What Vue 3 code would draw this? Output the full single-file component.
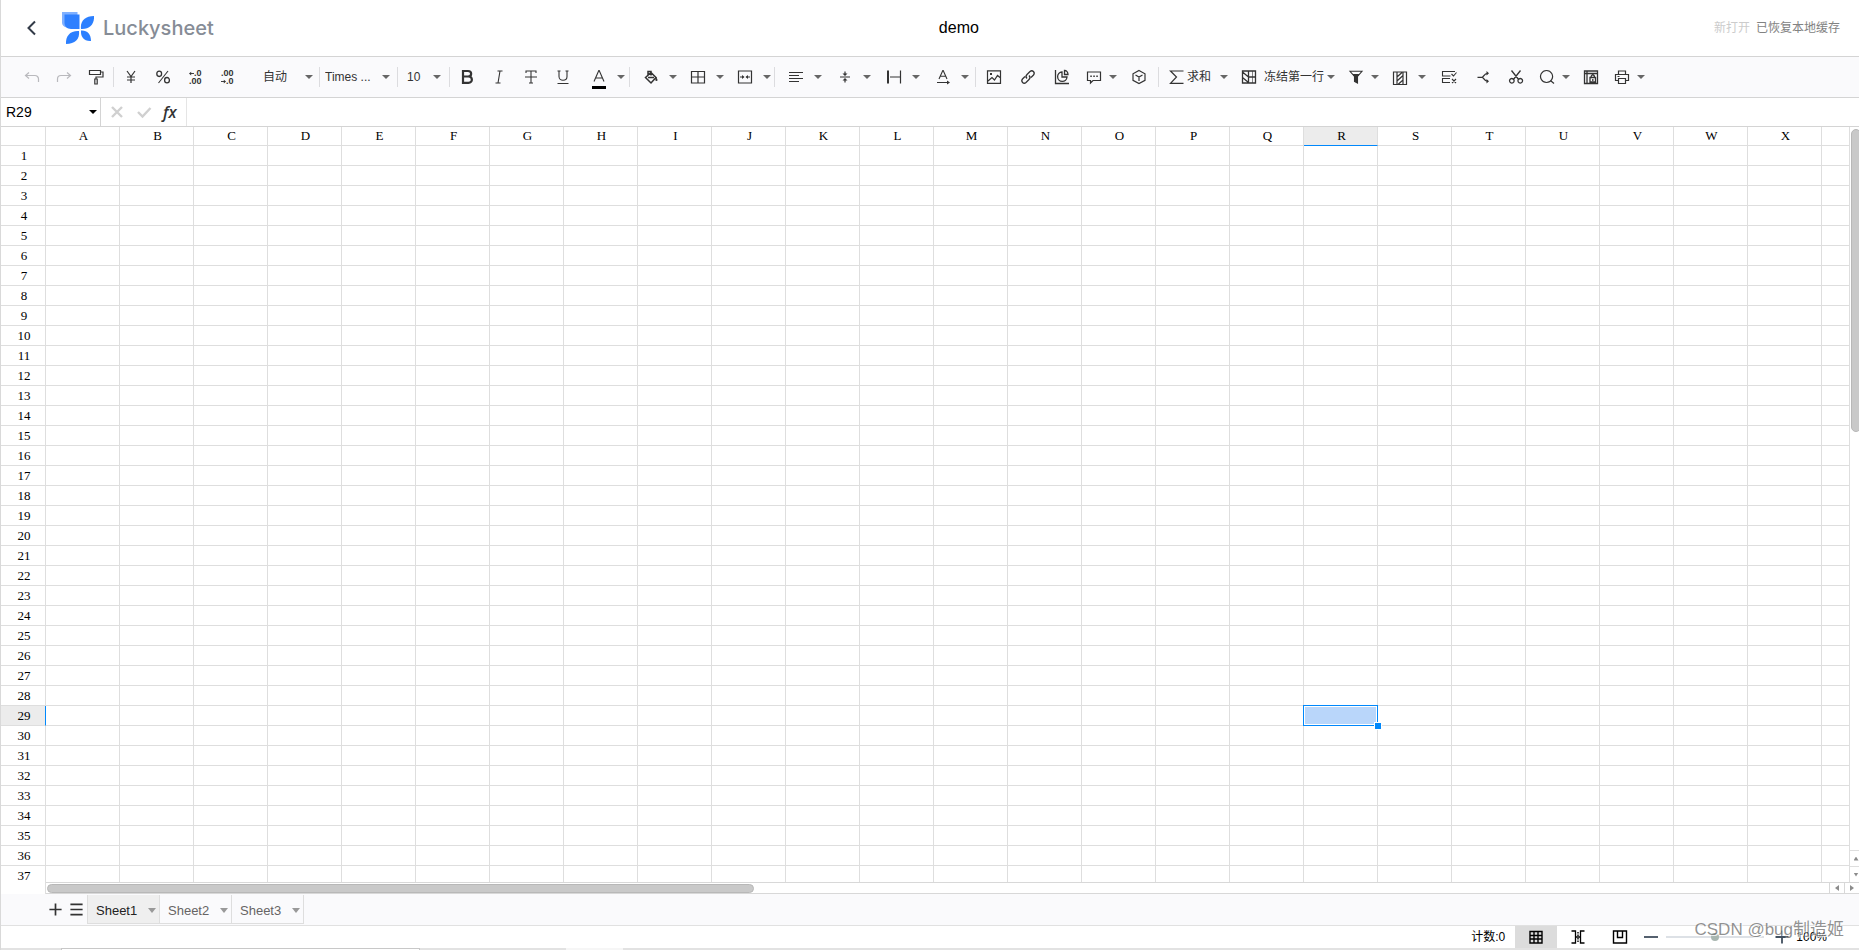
<script setup>
import { h, ref } from 'vue'

const icons = {
  back: [{ d: 'M11 1.5 4.5 8 11 14.5', w: 2 }],
  undo: [{ d: 'M5 3.5 1.5 6.5 5 9.5M1.5 6.5H11a3.5 3.5 0 0 1 3.5 3.5v3', w: 1.2 }],
  redo: [{ d: 'M11 3.5 14.5 6.5 11 9.5M14.5 6.5H5A3.5 3.5 0 0 0 1.5 10v3', w: 1.2 }],
  painter: [{ d: 'M1.5 1.5h11v4h-11zM12.5 3H15v5H8v2' }, { d: 'M6.8 10h2.4v5H6.8z' }],
  yen: [{ d: 'M4 2l4 5.5L12 2M8 7.5V14M4 8h8M4 11h8' }],
  percent: [{ d: 'M13 2 3.5 14', w: 1.1 }, { d: 'M4.2 2.2c-3.2 0-3.2 5.300 0 5.300s3.200-5.300 0-5.300zM12 8.500c-3.200 0-3.200 5.300 0 5.300s3.200-5.300 0-5.300z', w: 1.3 }],
  bold: [{ d: 'M4 2h5c4.200 0 4.200 5.500 0 5.500H4zM4 7.500h5.500c4.500 0 4.500 6.300 0 6.300H4z', w: 2.2 }],
  italic: [{ d: 'M6.500 2h5M4.500 14h5M9 2 7 14', w: 1.1 }],
  strike: [{ d: 'M3 4V2h10v2M8 2v12M6 14h4M2 8h12', w: 1.1 }],
  underline: [{ d: 'M2.500 2h3M10.500 2h3M4 2v5.500c0 5 8 5 8 0V2M2.500 14.500h11', w: 1.1 }],
  color: [{ d: 'M3 12.500 7.800 1.500h.4L13 12.500M4.700 9h6.600', w: 1.1 }],
  bucket: [{ d: 'M2.500 8.500 8 3.500l5 5-5 5.500zM5 6V2.500h3v4M5 8.500h6', w: 1.5 }, { d: 'M13 8c2 2.500 2 4 .5 4s-1.500-1.500-.5-4z', f: 1 }],
  border: [{ d: 'M1.500 2.500h13v11.500h-13zM8 2.500v11.500M1.500 8h13', w: 1.2 }],
  merge: [{ d: 'M1.500 2h13v12h-13zM3 8h3.500M13 8H9.500', w: 1.2 }, { d: 'M5 6 7.500 8 5 10zM11 6 8.500 8l2.500 2z', f: 1 }],
  align: [{ d: 'M1 3.500h14M1 6.500h10M1 9.500h14M1 12.500h10', w: 1.2 }],
  valign: [{ d: 'M3 8h10M8 2.500v3M8 10.500v3', w: 1.2 }, { d: 'M5.500 4.500h5L8 7zM5.500 11.500h5L8 9z', f: 1 }],
  wrap: [{ d: 'M2 1.500v13', w: 2 }, { d: 'M14.500 1.500v13M4 8h10', w: 1.2 }],
  rotate: [{ d: 'M4 10 7.800 1.500h.4L12 10M5.300 7.200h5.400M2 13.500h11', w: 1.1 }, { d: 'M12 11.500l3 2-3 2z', f: 1 }],
  image: [{ d: 'M1.500 1.800h13v12.500h-13zM2 12l4-3.500 2.500 2.500 3-4.500 2.500 2', w: 1.2 }, { d: 'M4 4h2v2H4z', f: 1 }],
  link: [{ d: 'M7 9.500c-1.500-1.500-1-3 0-4L10 2.500c2.500-2 5.500 1 3.500 3.500L11 8.500M9 6.500c1.500 1.500 1 3 0 4L6 13.500c-2.500 2-5.500-1-3.500-3.500L5 7.500', w: 1.3 }],
  chart: [{ d: 'M1.500 1v13.500H15M8 3a4.700 4.700 0 1 0 5 5H8zM10.500 1.500v4H14c0-2.500-1.500-4-3.500-4z', w: 1.3 }],
  comment: [{ d: 'M1.500 3h13v8.500H7L4.500 14v-2.500h-3z', w: 1.2 }, { d: 'M4.300 6.500h1.500V8H4.300zM7.300 6.500h1.500V8H7.300zM10.300 6.500h1.500V8h-1.500z', f: 1 }],
  pivot: [{ d: 'M8 1.500l6 3.300v6.500L8 14.500l-6-3.200V4.800zM4.500 6 8 8l3.500-2M8 8v4', w: 1.2 }],
  sum: [{ d: 'M14.500 2h-13l6 6-6 6.300h13', w: 1.2 }],
  freeze: [{ d: 'M1.500 2h13v12h-13zM7.500 2v12M7.500 8h7M1.500 3l6 5M1.500 8.500l6 5', w: 1.3 }, { d: 'M11.500 2v12', w: 0.6 }],
  filter: [{ d: 'M2 2.300h12L9.500 7.500V14l-3-1.500v-5z', w: 1.1 }, { d: 'M4.500 5h7l-2 3v6l-3-1.500V8z', f: 1 }],
  conditional: [{ d: 'M1.500 3h13v12.500h-13zM5 3v12.500M11 3v12.500M5 8l5-4.500M5 12l6-5.500M6 15.500l5-4.500', w: 1.2 }],
  validate: [{ d: 'M9 2.500H1.500v4.500H9M9 9.500H1.500V13.500H9M1.500 7h8M9 2.500h5M10.500 5l2 2 3-3.500M11 10l4 4M15 10l-4 4', w: 1.1 }],
  split: [{ d: 'M2.500 8.300h4.500c2 0 1.500-4 6-4M7 8.300c2 0 1.500 4 6 4', w: 1.3 }, { d: 'M11.500 2l2.500 2.300-2.500 2.200zM11.500 10l2.500 2.300-2.500 2.200z', f: 1 }],
  cut: [{ d: 'M3.500 1.500 11 11M12.500 1.500 5 11M3.800 9.500a2.300 2.300 0 1 0 .1 0zM12.200 9.500a2.300 2.300 0 1 0 .1 0z', w: 1.3 }],
  search: [{ d: 'M7.500 1.500a6 6 0 1 0 .1 0zM12 12l3 2.500', w: 1.2 }],
  protect: [{ d: 'M1.500 2h13v12.500h-13zM1.500 4.500h13M4 2v12.500M7 8.500h5.500V13H7zM8 8.500c0-3.500 3.500-3.500 3.500 0M9.800 10v2', w: 1.3 }],
  print: [{ d: 'M4.500 5V2h7v3M4.500 11.500h-3v-6h13v6h-3M4.500 9.500h7v5h-7zM3.500 7.500h2', w: 1.2 }],
  cancel: [{ d: 'M3 3l10 10M13 3 3 13', w: 2.4 }],
  check: [{ d: 'M2 8l4.500 4.500L14.500 4', w: 2.4 }],
  plus: [{ d: 'M8 1.500v13M1.500 8h13', w: 1.8 }],
  menu: [{ d: 'M1.500 2.500h13M1.500 8h13M1.500 13.500h13', w: 1.8 }],
  minus: [{ d: 'M1 8h14', w: 1.8 }],
  gridView: [{ d: 'M2 2.500h12v11.500H2zM6 2.500v11.500M10 2.500v11.500M2 6.500h12M2 10h12', w: 1.4 }],
  layoutView: [{ d: 'M1.500 2h4v12h-4M14.500 2h-4v12h4M5.500 8h5', w: 1.3 }, { d: 'M7.300 3h1.400v1.500H7.300zM7.300 5.500h1.400V7H7.300zM7.300 9h1.400v1.500H7.300zM7.300 11.500h1.400V13H7.300z', f: 1 }],
  pageView: [{ d: 'M1.500 2h13v12h-13zM5.500 2v6.500h5V2', w: 1.4 }],
  arrowLeft: [{ d: 'M3 8h13', w: 3 }, { d: 'M0 8l7-6v12z', f: 1 }],
  arrowRight: [{ d: 'M0 8h13', w: 3 }, { d: 'M16 8l-7-6v12z', f: 1 }]
}

const Icon = (props) =>
  h('svg', { viewBox: '0 0 16 16', width: 16, height: 16, fill: 'none', 'aria-hidden': 'true' },
    icons[props.name].map((p) => h('path', {
      d: p.d,
      stroke: p.f ? 'none' : 'currentColor',
      'stroke-width': p.w || 1.2,
      fill: p.f ? 'currentColor' : 'none'
    })))
Icon.props = ['name']

const formats = [
  { icon: 'bold', label: '粗体' }, { icon: 'italic', label: '斜体' },
  { icon: 'strike', label: '删除线' }, { icon: 'underline', label: '下划线' }
]
const cellTools = [
  { icon: 'bucket', label: '单元格颜色' }, { icon: 'border', label: '边框' }, { icon: 'merge', label: '合并单元格' }
]
const alignTools = [
  { icon: 'align', label: '水平对齐' }, { icon: 'valign', label: '垂直对齐' },
  { icon: 'wrap', label: '文本换行' }, { icon: 'rotate', label: '文本旋转' }
]
const insertTools = [
  { icon: 'image', label: '插入图片' }, { icon: 'link', label: '插入链接' }, { icon: 'chart', label: '图表' }
]

const columns = 'ABCDEFGHIJKLMNOPQRSTUVWX'.split('')
const selected = { col: 'R', row: 29 }
const cellName = ref('R29')
const formula = ref('')
const zoom = ref(50)
const sheets = ['Sheet1', 'Sheet2', 'Sheet3']
const activeSheet = ref('Sheet1')
</script>

<template>
  <div class="app">
    <header class="header">
      <button class="back" aria-label="返回"><Icon name="back" /></button>
      <a class="brand" href="#">
        <svg class="logo" viewBox="0 0 32 32" width="32" height="32" aria-hidden="true">
          <path d="M0 0h15.500v15.500H5A5 5 0 0 1 0 10z" fill="#7fb0ff" />
          <path d="M2.500 2.500h15V17H9c-4 0-6.500-3-6.500-6z" fill="#2f80ff" />
          <path d="M32 4c.5 8-4 13.500-13 13C18 9 23 4 32 4z" fill="#2b7fff" />
          <path d="M4 32c-.5-8 4-13.500 13-13 1 8-4 13-13 13z" fill="#2b7fff" />
          <path d="M19 18.500c6-.5 10 3.500 10 10.500-7 .5-10.500-4-10-10.500z" fill="#2b7fff" />
        </svg>
        <span class="wordmark">Luckysheet</span>
      </a>
      <h1 class="title">demo</h1>
      <p class="status"><span class="opened">新打开</span><span>已恢复本地缓存</span></p>
    </header>

    <div class="toolbar" role="toolbar" aria-label="工具栏">
      <div class="group history">
        <button class="tool faded" aria-label="撤销"><Icon name="undo" /></button>
        <button class="tool faded" aria-label="重做"><Icon name="redo" /></button>
        <button class="tool" aria-label="格式刷"><Icon name="painter" /></button>
      </div>
      <div class="group">
        <button class="tool" aria-label="货币格式"><Icon name="yen" /></button>
        <button class="tool" aria-label="百分比格式"><Icon name="percent" /></button>
        <button class="tool decimal" aria-label="减少小数位数"><span><Icon name="arrowLeft" />.0</span><span>.00</span></button>
        <button class="tool decimal" aria-label="增加小数位数"><span>.00</span><span><Icon name="arrowRight" />.0</span></button>
        <label class="pick format"><select aria-label="数字格式"><option>自动</option></select><i class="caret"></i></label>
      </div>
      <div class="group">
        <label class="pick font"><select aria-label="字体"><option>Times ...</option></select><i class="caret"></i></label>
      </div>
      <div class="group">
        <label class="pick size"><select aria-label="字号"><option>10</option></select><i class="caret"></i></label>
      </div>
      <div class="group">
        <button v-for="t in formats" :key="t.icon" class="tool" :aria-label="t.label"><Icon :name="t.icon" /></button>
        <button class="combo ink" aria-label="文本颜色"><Icon name="color" /><i class="caret"></i></button>
      </div>
      <div class="group">
        <button v-for="t in cellTools" :key="t.icon" class="combo" :aria-label="t.label"><Icon :name="t.icon" /><i class="caret"></i></button>
      </div>
      <div class="group alignment">
        <button v-for="t in alignTools" :key="t.icon" class="combo roomy" :aria-label="t.label"><Icon :name="t.icon" /><i class="caret"></i></button>
      </div>
      <div class="group">
        <button v-for="t in insertTools" :key="t.icon" class="tool wide" :aria-label="t.label"><Icon :name="t.icon" /></button>
        <button class="combo tight" aria-label="批注"><Icon name="comment" /><i class="caret"></i></button>
        <button class="tool wide" aria-label="数据透视表"><Icon name="pivot" /></button>
      </div>
      <div class="group">
        <button class="combo sum"><Icon name="sum" /><span>求和</span><i class="caret"></i></button>
        <button class="combo freeze"><Icon name="freeze" /><span>冻结第一行</span><i class="caret"></i></button>
        <button class="combo tight filter" aria-label="筛选"><Icon name="filter" /><i class="caret"></i></button>
        <button class="combo rules" aria-label="条件格式"><Icon name="conditional" /><i class="caret"></i></button>
        <button class="tool wide" aria-label="数据验证"><Icon name="validate" /></button>
        <button class="tool wide" aria-label="分列"><Icon name="split" /></button>
        <button class="tool" aria-label="截图"><Icon name="cut" /></button>
        <button class="combo tight" aria-label="查找替换"><Icon name="search" /><i class="caret"></i></button>
        <button class="tool" aria-label="工作表保护"><Icon name="protect" /></button>
        <button class="combo tight" aria-label="打印"><Icon name="print" /><i class="caret"></i></button>
      </div>
    </div>

    <div class="formula-bar">
      <div class="name-box">
        <input v-model="cellName" aria-label="单元格名称">
        <button aria-label="名称列表"><i class="caret dark"></i></button>
      </div>
      <div class="formula-actions">
        <button class="off" aria-label="取消"><Icon name="cancel" /></button>
        <button class="off" aria-label="确认"><Icon name="check" /></button>
        <button class="fx" aria-label="插入函数">fx</button>
      </div>
      <input v-model="formula" class="formula" aria-label="公式">
    </div>

    <main class="sheet">
      <div class="cells">
        <table>
          <colgroup>
            <col class="row-col">
            <col v-for="c in columns" :key="c" class="data-col">
            <col>
          </colgroup>
          <thead>
            <tr>
              <td></td>
              <th v-for="c in columns" :key="c" scope="col" :class="{ current: c === selected.col }">{{ c }}</th>
              <td></td>
            </tr>
          </thead>
          <tbody>
            <tr v-for="r in 37" :key="r">
              <th scope="row" :class="{ current: r === selected.row }">{{ r }}</th>
              <td v-for="c in columns" :key="c">
                <div v-if="r === selected.row && c === selected.col" class="selection"><i></i></div>
              </td>
              <td></td>
            </tr>
          </tbody>
        </table>
      </div>
      <div class="vscroll">
        <div class="vtrack"><div class="vthumb"></div></div>
        <button aria-label="向上滚动"><i class="arrow up"></i></button>
        <button aria-label="向下滚动"><i class="arrow down"></i></button>
      </div>
      <div class="hscroll">
        <div class="corner"></div>
        <div class="htrack"><div class="hthumb"></div></div>
        <button aria-label="向左滚动"><i class="arrow left"></i></button>
        <button aria-label="向右滚动"><i class="arrow right"></i></button>
      </div>
    </main>

    <nav class="tabs" aria-label="工作表">
      <button class="tab-tool" aria-label="新增工作表"><Icon name="plus" /></button>
      <button class="tab-tool" aria-label="工作表列表"><Icon name="menu" /></button>
      <div class="tab-list">
        <button v-for="s in sheets" :key="s" class="tab" :class="{ active: s === activeSheet }" @click="activeSheet = s">
          {{ s }}<i class="caret pale"></i>
        </button>
      </div>
    </nav>

    <footer class="footer">
      <span class="count">计数:0</span>
      <button class="view active" aria-label="普通视图"><Icon name="gridView" /></button>
      <button class="view" aria-label="页面布局"><Icon name="layoutView" /></button>
      <button class="view" aria-label="分页预览"><Icon name="pageView" /></button>
      <button class="zoom-step" aria-label="缩小"><Icon name="minus" /></button>
      <input v-model="zoom" type="range" aria-label="缩放">
      <button class="zoom-step" aria-label="放大"><Icon name="plus" /></button>
      <span class="percent">100%</span>
    </footer>
    <div class="edge"><i class="edge-main"></i><i class="edge-small"></i></div>
    <div class="watermark">CSDN @bug制造姬</div>
  </div>
</template>

<style>
body {
  margin: 0;
  overflow: hidden;
}
</style>

<style scoped>
.app {
  position: relative;
  display: flex;
  flex-direction: column;
  height: 100vh;
  box-sizing: border-box;
  overflow: hidden;
  border-left: 1px solid #d9d9d9;
  background: #fff;
  color: #333;
  font: 12px/16px "Liberation Sans", "Noto Sans CJK SC", sans-serif;
}
.app * { box-sizing: border-box; }
button, input, select {
  margin: 0;
  padding: 0;
  border: 0;
  border-radius: 0;
  background: none;
  color: inherit;
  font: inherit;
  outline: 0;
}
svg { display: block; flex: none; }

.header {
  display: flex;
  flex: none;
  align-items: center;
  height: 57px;
  padding: 0 19px 0 23px;
  border-bottom: 1px solid #d4d4d4;
}
.back { color: #333b48; }
.brand {
  display: flex;
  align-items: center;
  gap: 9px;
  margin-left: 22px;
  text-decoration: none;
}
.wordmark {
  color: #868c96;
  font: 500 20px/28px Inter, sans-serif;
}
.title {
  flex: 1;
  margin: 0;
  padding-right: 10px;
  color: #000;
  font-size: 16px;
  font-weight: 400;
  line-height: 20px;
  text-align: center;
}
.status {
  display: flex;
  gap: 6px;
  margin: 0;
  color: #828282;
}
.opened { color: #ccc; }

.toolbar {
  display: flex;
  flex: none;
  align-items: center;
  height: 41px;
  padding-left: 14px;
  border-bottom: 1px solid #d4d4d4;
  background: #fafafc;
}
.group {
  display: flex;
  align-items: center;
  height: 20px;
  padding: 0 2px 0 1px;
  border-right: 1px solid #dcdcdf;
}
.group.history { padding-right: 1px; }
.group.alignment { padding-right: 3px; }
.group:last-child { border-right: 0; }
.tool {
  display: flex;
  align-items: center;
  justify-content: center;
  width: 32px;
  height: 24px;
}
.tool.wide { width: 34px; }
.faded { color: #b9b9bd; }
.decimal {
  flex-direction: column;
  font: bold 9px/8px "Liberation Sans", sans-serif;
}
.decimal span {
  display: flex;
  align-items: center;
  justify-content: flex-end;
  width: 13px;
}
.decimal svg { width: 5px; height: 5px; }
.caret {
  flex: none;
  width: 8px;
  height: 4px;
  background: #666;
  clip-path: polygon(0 0, 100% 0, 50% 100%);
}
.caret.dark { background: #000; }
.caret.pale { height: 5px; background: #999; }
.pick {
  display: flex;
  align-items: center;
}
.pick select {
  flex: 1;
  min-width: 0;
  height: 20px;
  appearance: none;
}
.format { width: 74px; padding: 0 4px 0 20px; }
.font { width: 74px; padding: 0 5px 0 4px; }
.size { width: 48px; padding: 0 6px 0 8px; }
.combo {
  display: flex;
  align-items: center;
  gap: 10px;
  width: 47px;
  height: 24px;
  padding-left: 12px;
  white-space: nowrap;
}
.combo.ink { position: relative; width: 48px; }
.combo.ink::after {
  content: "";
  position: absolute;
  left: 13px;
  bottom: 0;
  width: 14px;
  height: 3px;
  background: #000;
}
.combo.roomy { width: 49px; }
.combo.rules { width: 52px; }
.combo.tight {
  gap: 7px;
  width: 43px;
  padding-left: 7px;
}
.combo.filter { width: 39px; }
.combo.sum {
  gap: 2px;
  width: 72px;
  padding-left: 9px;
}
.sum .caret { margin-left: 7px; }
.combo.freeze {
  gap: 3px;
  width: 109px;
  padding-left: 9px;
}
.freeze span { margin-left: 4px; }

.formula-bar {
  display: flex;
  flex: none;
  height: 29px;
  border-bottom: 1px solid #d4d4d4;
}
.name-box {
  display: flex;
  width: 100px;
  padding: 0 3px 0 5px;
  border-right: 1px solid #d4d4d4;
}
.name-box input {
  flex: 1;
  min-width: 0;
  color: #000;
  font-size: 14px;
}
.name-box .caret { display: block; }
.formula-actions {
  display: flex;
  align-items: center;
  gap: 11px;
  width: 86px;
  padding-left: 8px;
  border-right: 1px solid #e5e5e5;
}
.off { color: #d0d0d0; }
.fx { font: italic 600 16px/24px "Open Sans", sans-serif; }
.formula { flex: 1; padding: 0 6px; font-size: 14px; }

.sheet {
  flex: 1;
  display: grid;
  grid-template: minmax(0, 1fr) 12px / minmax(0, 1fr) 9px;
  min-height: 0;
}
.cells { overflow: hidden; }
table {
  width: 100%;
  table-layout: fixed;
  border-collapse: separate;
  border-spacing: 0;
  color: #000;
  font: 13px/16px "Liberation Serif", serif;
}
.row-col { width: 45px; }
.data-col { width: 74px; }
th, td {
  height: 20px;
  padding: 0;
  border: solid #dedede;
  border-width: 0 1px 1px 0;
  font-weight: 400;
}
thead th, thead td { height: 19px; }
th { padding-left: 2px; }
th.current { background: #ececec; }
thead .current { border-bottom-color: #0188fb; }
tbody .current { border-right-color: #0188fb; }
.selection {
  position: relative;
  height: 21px;
  margin: -1px;
  padding: 1px;
  border: 1px solid #0188fb;
  background: #b9d6fa content-box;
}
.selection i {
  position: absolute;
  right: -5px;
  bottom: -5px;
  width: 8px;
  height: 8px;
  border: 1px solid #fff;
  background: #0188fb;
}
.vscroll {
  display: flex;
  flex-direction: column;
  overflow: hidden;
}
.vtrack { flex: 1; padding: 2px 0 0 1px; }
.vthumb {
  width: 10px;
  height: 42%;
  border: 1px solid #b8b8b8;
  border-radius: 5px;
  background: #c9c9c9;
}
.vscroll button {
  display: flex;
  align-items: center;
  justify-content: center;
  width: 12px;
  height: 16px;
  border-top: 1px solid #dedede;
}
.arrow { background: #8c8c8c; }
.up { width: 5px; height: 4px; clip-path: polygon(50% 0, 100% 100%, 0 100%); }
.down { width: 5px; height: 4px; clip-path: polygon(0 0, 100% 0, 50% 100%); }
.left { width: 4px; height: 6px; clip-path: polygon(100% 0, 100% 100%, 0 50%); }
.right { width: 4px; height: 6px; clip-path: polygon(0 0, 100% 50%, 0 100%); }
.hscroll {
  grid-column: 1 / -1;
  display: flex;
}
.corner { width: 45px; border-right: 1px solid #dedede; }
.htrack {
  flex: 1;
  padding: 1px 0 0 1px;
  border: solid #d8d8d8;
  border-width: 1px 0;
}
.hthumb {
  width: calc(40% - 6px);
  height: 9px;
  border: 1px solid #b8b8b8;
  border-radius: 5px;
  background: #c9c9c9;
}
.hscroll button {
  display: flex;
  align-items: center;
  justify-content: center;
  width: 15px;
  border: solid #d8d8d8;
  border-width: 1px 0 1px 1px;
}

.tabs {
  display: flex;
  flex: none;
  align-items: flex-start;
  height: 32px;
  padding-left: 44px;
  border-bottom: 1px solid #e1e1e1;
  background: #fafafc;
}
.tab-tool {
  display: flex;
  align-items: center;
  justify-content: center;
  width: 21px;
  height: 30px;
  color: #333;
}
.tab-tool svg { width: 15px; height: 15px; }
.tab-list {
  display: flex;
  margin-top: 1px;
  border-left: 1px solid #dedede;
}
.tab {
  display: flex;
  align-items: center;
  justify-content: space-between;
  width: 72px;
  height: 29px;
  padding: 3px 3px 0 8px;
  border: solid #dedede;
  border-width: 0 1px 1px 0;
  color: #676464;
  font-size: 13px;
}
.tab.active { background: #efefef; color: #222; }

.footer {
  display: flex;
  flex: none;
  align-items: center;
  justify-content: flex-end;
  height: 22px;
  padding-right: 32px;
  color: #000;
}
.count { margin-right: 10px; }
.view {
  display: flex;
  align-items: center;
  justify-content: center;
  width: 42px;
  height: 22px;
}
.view.active { background: #dcdcdc; }
.zoom-step { width: 16px; color: #42505f; }
.view + .zoom-step { margin-left: 2px; }
.footer input {
  width: 98px;
  height: 8px;
  margin: 0 10px 0 7px;
  appearance: none;
  background: linear-gradient(#dde1e6, #dde1e6) center / 100% 2px no-repeat;
}
.footer input::-webkit-slider-thumb {
  width: 8px;
  height: 8px;
  border-radius: 50%;
  appearance: none;
  background: #a9b7b1;
}
.percent { margin-left: 6px; }
.edge {
  display: flex;
  flex: none;
  height: 2px;
  padding-left: 60px;
  gap: 146px;
  background: #e2e2e2;
}
.edge-main { width: 359px; border: solid #c8c8c8; border-width: 1px 1px 0; background: #fff; }
.edge-small { width: 57px; background: #f6f6f6; }
.watermark {
  position: absolute;
  right: 15px;
  bottom: 8px;
  color: rgba(110, 110, 110, 0.75);
  font-size: 17px;
  line-height: 24px;
  text-shadow: 1px 1px 0 rgba(255, 255, 255, 0.8);
  pointer-events: none;
}
</style>
